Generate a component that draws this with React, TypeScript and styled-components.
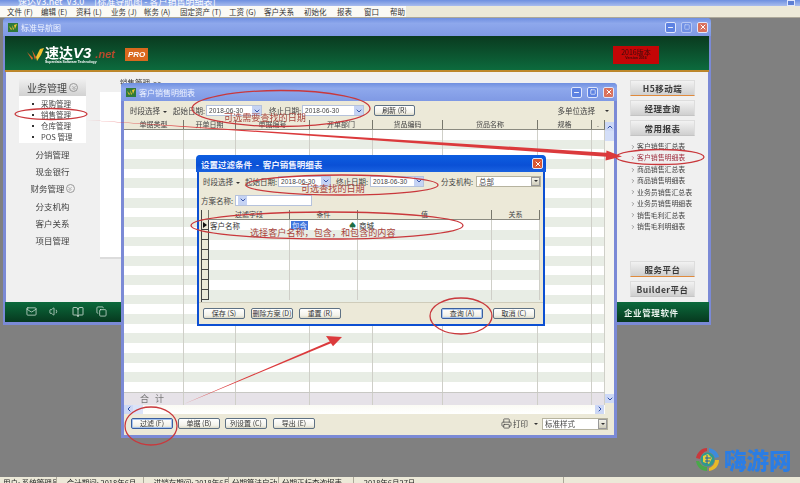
import React from "react";
import styled, { createGlobalStyle } from "styled-components";
import { Mail, Volume1, BookOpen, Copy, Printer, ChevronDown, ChevronUp, ChevronLeft, ChevronRight, ChevronsDown, Minus, Square, X } from "lucide-react";

const Global = createGlobalStyle`
  html, body { margin: 0; padding: 0; width: 800px; height: 483px; overflow: hidden; background: #808080; }
  body { font-family: "Noto Sans CJK SC", "Liberation Sans", sans-serif; color: #333; }
  * { box-sizing: border-box; }
`;

const Page = styled.div`
  position: relative;
  width: 800px;
  height: 483px;
  display: flex;
  flex-direction: column;
  overflow: hidden;
  filter: blur(0.35px);
`;

const AppTitle = styled.div`
  height: 6px;
  background: linear-gradient(#6d8fe0, #a9bdee);
  color: #fff;
  font-size: 9px;
  line-height: 8px;
  padding-left: 18px;
  display: flex;
  justify-content: space-between;
  overflow: hidden;
  align-items: flex-end;
  white-space: pre;
`;
const AppCorner = styled.span`
  width: 8px;
  height: 6px;
  background: #5d7fd4;
  border: 1px solid #dfe6fb;
  margin-right: 5px;
`;
const MenuBar = styled.div`
  height: 12px;
  background: #ece9d8;
  border-bottom: 1px solid #aca899;
  display: flex;
  font-size: 7.5px;
  line-height: 11px;
  color: #333;
`;
const MenuItem = styled.span<{ $w: number }>`
  width: ${(p) => p.$w}px;
  padding-left: 7px;
  background: #fbfaf5;
  white-space: nowrap;
`;
const MenuRest = styled.span`
  flex: 1;
`;

const Desktop = styled.div`
  position: relative;
  flex: 1;
  background: #808080;
`;
const StatusBar = styled.div`
  height: 6px;
  background: #ece9d8;
  display: flex;
  font-size: 7.5px;
  line-height: 11px;
  overflow: hidden;
  color: #222;
  white-space: pre;
`;
const StatusCell = styled.span<{ $w: number }>`
  width: ${(p) => p.$w}px;
  flex: none;
  overflow: hidden;
  padding-left: 3px;
  border-right: 1px solid #aca899;
`;

const Win = styled.section<{ $x: number; $y: number; $w: number; $h: number; $dlg?: boolean }>`
  position: absolute;
  left: ${(p) => p.$x}px;
  top: ${(p) => p.$y}px;
  width: ${(p) => p.$w}px;
  height: ${(p) => p.$h}px;
  border: ${(p) => (p.$dlg ? "2px solid #0c4fd2" : "3px solid #7b8ad6")};
  border-top: 0;
  border-radius: 4px 4px 0 0;
  display: flex;
  flex-direction: column;
  background: #ece9d8;
`;
const TitleBar = styled.header<{ $dlg?: boolean }>`
  height: ${(p) => (p.$dlg ? 17 : 18)}px;
  flex: none;
  margin: 0 -3px;
  padding: 0 3px 0 5px;
  border-radius: 4px 4px 0 0;
  background: ${(p) => (p.$dlg ? "linear-gradient(#0d5ee0, #0a50d6 60%, #1a62e0)" : "linear-gradient(#6f8fe0, #8ea8ec 30%, #7f99e4)")};
  color: #eef2ff;
  font-size: ${(p) => (p.$dlg ? 8.5 : 8)}px;
  font-weight: ${(p) => (p.$dlg ? 700 : 400)};
  display: flex;
  align-items: center;
  gap: 3px;
  white-space: pre;
`;
const TitleText = styled.span`
  flex: 1;
`;
const WinIcon = styled.svg`
  width: 10px;
  height: 9px;
  flex: none;
`;
const CapBtn = styled.span<{ $c: string; $off?: boolean }>`
  width: 11px;
  height: 11px;
  margin-left: 2px;
  border: 1px solid #dfe6fb;
  border-radius: 2px;
  background: ${(p) => p.$c};
  color: #fff;
  display: flex;
  align-items: center;
  justify-content: center;
  opacity: ${(p) => (p.$off ? 0.55 : 1)};
`;

const AppGlyph = () => (
  <WinIcon viewBox="0 0 10 9">
    <rect width="10" height="9" fill="#2f7a3a" />
    <path d="M1 3l2 4 1-1zM4 2l1 5 1-1zM6 2l1 4 2-5z" fill="#f4c430" />
  </WinIcon>
);
const Caption = ({ maxOff }: { maxOff?: boolean }) => (
  <>
    <CapBtn $c="#5d82e2"><Minus size={7} strokeWidth={3} /></CapBtn>
    <CapBtn $c="#5d82e2" $off={maxOff}><Square size={6} strokeWidth={2.5} /></CapBtn>
    <CapBtn $c="#d9705c"><X size={8} strokeWidth={3} /></CapBtn>
  </>
);

/* navigator window */
const Banner = styled.div`
  height: 36px;
  flex: none;
  background: linear-gradient(#0a3a1f, #0c6a3d 94%, #c08a2c 94%, #b9842a);
  margin: 0 -1px;
  display: flex;
  align-items: center;
  padding: 1px 50px 0 22px;
`;
const BrandIcon = styled.svg`
  width: 17px;
  height: 14px;
  margin-right: 1px;
`;
const BrandBlock = styled.div`
  display: flex;
  flex-direction: column;
  line-height: 1;
`;
const BrandName = styled.div`
  color: #fff;
  font-size: 14px;
  font-weight: 700;
  display: flex;
  align-items: baseline;
  line-height: 14px;
  white-space: pre;
`;
const BrandV = styled.i`
  font-family: "Liberation Sans", sans-serif;
  font-size: 15px;
`;
const BrandNet = styled.i`
  font-family: "Liberation Sans", sans-serif;
  color: #b84a2c;
  font-size: 11px;
  margin-left: 4px;
`;
const BrandSub = styled.div`
  color: #fff;
  font-size: 3.4px;
  font-weight: 700;
  white-space: nowrap;
  font-family: "Liberation Sans", sans-serif;
`;
const ProBadge = styled.i`
  background: #d9691e;
  color: #fff;
  font-family: "Liberation Sans", sans-serif;
  font-weight: 700;
  font-size: 8px;
  padding: 2px 3px;
  margin-left: 10px;
`;
const BannerGap = styled.div`
  flex: 1;
`;
const Version = styled.div`
  width: 46px;
  height: 18px;
  background: #c40606;
  color: #3a0b0b;
  text-align: center;
  font-size: 7px;
  line-height: 7px;
  padding-top: 3px;
`;
const VersionSub = styled.div`
  font-size: 3.5px;
  line-height: 4px;
  font-weight: 700;
  font-family: "Liberation Sans", sans-serif;
`;
const NavMain = styled.div`
  flex: 1;
  display: flex;
  background: #f0f0f0;
  min-height: 0;
`;
const LeftCol = styled.nav`
  width: 94px;
  flex: none;
  padding: 7px 0 0 13px;
`;
const NavHead = styled.div`
  width: 67px;
  height: 17px;
  background: linear-gradient(#efefef, #d2d2d2);
  font-size: 10px;
  line-height: 16px;
  color: #444;
  display: flex;
  align-items: center;
  justify-content: center;
  gap: 2px;
`;
const Collapse = styled.span`
  width: 9px;
  height: 9px;
  border: 1px solid #999;
  border-radius: 50%;
  display: flex;
  align-items: center;
  justify-content: center;
  color: #666;
`;
const SubMenu = styled.ul`
  width: 67px;
  height: 47px;
  margin: 0 0 3px;
  padding: 2px 0 0 13px;
  list-style: none;
  background: #fff;
`;
const SubItem = styled.li`
  font-size: 7.5px;
  line-height: 11px;
  color: #444;
  display: flex;
  align-items: center;
  gap: 7px;
  white-space: pre;
  &::before {
    content: "";
    width: 2px;
    height: 2px;
    background: #333;
  }
`;
const NavLink = styled.div`
  width: 67px;
  height: 17.2px;
  font-size: 8.5px;
  line-height: 17px;
  text-align: center;
  color: #444;
  display: flex;
  justify-content: center;
  align-items: center;
  gap: 1px;
`;
const Center = styled.div`
  flex: 1;
  display: flex;
  flex-direction: column;
  padding-top: 6px;
`;
const Crumb = styled.div`
  height: 14px;
  padding-left: 20px;
  font-size: 7.5px;
  line-height: 10px;
  color: #333;
  white-space: pre;
`;
const CenterWhite = styled.div`
  height: 167px;
  background: #fff;
  border-bottom: 2px solid #dcdcdc;
`;
const RightCol = styled.aside`
  width: 91px;
  flex: none;
  padding: 8px 0 0 13px;
  display: flex;
  flex-direction: column;
`;
const BigBtn = styled.div<{ $line?: boolean; $mb: number }>`
  width: 65px;
  height: 16px;
  flex: none;
  margin-bottom: ${(p) => p.$mb}px;
  background: linear-gradient(#f2f2f2, #cfcfcf);
  border: 1px solid #ddd;
  border-bottom: ${(p) => (p.$line ? "1px solid #e08a3c" : "1px solid #c4c4c4")};
  font-size: 8.5px;
  font-weight: 700;
  line-height: 14px;
  text-align: center;
  letter-spacing: 0.5px;
  color: #3a3a3a;
`;
const ReportList = styled.ul`
  list-style: none;
  margin: 0 0 29px;
  padding: 0;
  height: 91px;
  flex: none;
`;
const ReportItem = styled.li<{ $on?: boolean }>`
  height: 11.45px;
  font-size: 6.9px;
  line-height: 11.45px;
  color: ${(p) => (p.$on ? "#a03040" : "#444")};
  display: flex;
  align-items: center;
  gap: 1px;
  white-space: nowrap;
`;
const NavFoot = styled.footer`
  height: 20px;
  flex: none;
  background: linear-gradient(#0b6a3c, #07391f);
  margin: 0 -1px;
  display: flex;
  align-items: center;
  padding-left: 21px;
  color: #e4efe8;
`;
const FootIcons = styled.div`
  display: flex;
  gap: 12px;
  width: 598px;
`;
const FootTitle = styled.span`
  font-size: 8.5px;
  font-weight: 700;
  letter-spacing: 0.6px;
  color: #e8f2ec;
`;

/* toolbars */
const ToolRow = styled.div<{ $h: number; $pad?: number }>`
  height: ${(p) => p.$h}px;
  flex: none;
  display: flex;
  align-items: center;
  padding-left: ${(p) => p.$pad ?? 6}px;
  font-size: 7.5px;
  color: #444;
  white-space: pre;
`;
const Label = styled.span<{ $w: number }>`
  width: ${(p) => p.$w}px;
  flex: none;
`;
const Caret = styled.span`
  display: inline-block;
  width: 0;
  height: 0;
  margin-left: 3px;
  vertical-align: 1px;
  border-left: 2px solid transparent;
  border-right: 2px solid transparent;
  border-top: 2.5px solid #333;
`;
const DateBox = styled.div<{ $w: number; $mr: number }>`
  width: ${(p) => p.$w}px;
  height: 11px;
  flex: none;
  margin-right: ${(p) => p.$mr}px;
  background: #fff;
  border: 1px solid #b5c2dc;
  font-size: 6.5px;
  line-height: 9px;
  padding-left: 2px;
  letter-spacing: 0.1px;
  color: #444;
  display: flex;
  justify-content: space-between;
  font-family: "Liberation Sans", sans-serif;
`;
const DropBtn = styled.span`
  width: 9px;
  background: #c5d3f4;
  color: #3a55a8;
  display: flex;
  align-items: center;
  justify-content: center;
`;
const XpBtn = styled.button<{ $w?: number; $on?: boolean; $mr?: number }>`
  width: ${(p) => p.$w ?? 42}px;
  height: 11px;
  flex: none;
  margin: 0 ${(p) => p.$mr ?? 0}px 0 0;
  padding: 0;
  border: 1px solid ${(p) => (p.$on ? "#3a5f9f" : "#5e7184")};
  border-radius: 2px;
  background: linear-gradient(#fff, #f3f2ea 70%, #dcd9c8);
  box-shadow: ${(p) => (p.$on ? "inset 0 0 0 1px #a9c6ee" : "none")};
  font: 7px/9px "Noto Sans CJK SC", sans-serif;
  color: #333;
  white-space: nowrap;
`;
const Spacer = styled.span`
  flex: 1;
`;
const SelectBox = styled.div<{ $w: number; $h?: number }>`
  width: ${(p) => p.$w}px;
  height: ${(p) => p.$h ?? 11}px;
  flex: none;
  background: #fff;
  border: 1px solid #b6b39f;
  font-size: 7.5px;
  line-height: 9px;
  padding-left: 2px;
  color: #444;
  display: flex;
  justify-content: space-between;
`;
const SelBtn = styled.span`
  width: 9px;
  background: linear-gradient(#f4f3ea, #d0cdbb);
  border: 1px solid #999;
  display: flex;
  align-items: center;
  justify-content: center;
`;

/* sheet */
const TableArea = styled.div`
  flex: 1;
  min-height: 0;
  display: flex;
`;
const SheetCol = styled.div`
  flex: 1;
  min-width: 0;
  display: flex;
  flex-direction: column;
`;
const HeaderRow = styled.div<{ $cols: string }>`
  display: grid;
  grid-template-columns: ${(p) => p.$cols};
  height: 10px;
  flex: none;
  background: #ece9d8;
  border-bottom: 1px solid #8a8a80;
`;
const HeadCell = styled.div`
  font-size: 7px;
  line-height: 9px;
  text-align: center;
  color: #444;
  border-right: 1px solid #77776c;
  overflow: hidden;
  white-space: nowrap;
`;
const DataRow = styled.div<{ $cols: string; $alt: boolean; $h: number }>`
  display: grid;
  grid-template-columns: ${(p) => p.$cols};
  height: ${(p) => p.$h}px;
  flex: none;
  background: ${(p) => (p.$alt ? "#e8ede5" : "#fff")};
`;
const DataCell = styled.div`
  border-right: 1px solid #cfcfc8;
  font-size: 7.5px;
  line-height: 9px;
  color: #333;
  padding-left: 1px;
  display: flex;
  align-items: center;
  justify-content: space-between;
  white-space: nowrap;
  overflow: hidden;
`;
const Highlight = styled.span`
  background: #3f74dc;
  color: #dfe8ff;
  padding: 0 1px;
`;
const Spade = styled.span`
  color: #1f6d43;
  font-size: 7px;
  padding-right: 1px;
`;
const TotalRow = styled(DataRow)`
  background: #e6e2e8;
  border-top: 1px solid #c8c8c4;
  color: #777;
`;
const TotalCell = styled(DataCell)`
  font-size: 9px;
  letter-spacing: 6px;
  padding-left: 16px;
  color: #777;
  justify-content: flex-start;
`;
const HScroll = styled.div`
  height: 9px;
  flex: none;
  background: linear-gradient(#fbfbf4, #fff);
  display: flex;
  padding-right: 1px;
`;
const ScrollBtn = styled.span`
  width: 9px;
  height: 9px;
  flex: none;
  background: #cdd8f6;
  color: #2f4fa8;
  display: flex;
  align-items: center;
  justify-content: center;
`;
const Thumb = styled.span`
  width: 10px;
  background: #dbe3f8;
`;
const VScroll = styled.div`
  width: 9px;
  flex: none;
  margin-top: 2px;
  display: flex;
  flex-direction: column;
  background: #f6f6f0;
`;
const VThumb = styled.span`
  height: 10px;
  background: #d3def8;
`;
const VGap = styled.span`
  flex: 1;
`;
const Corner = styled.span`
  height: 9px;
  background: #ece9d8;
`;
const PrintLabel = styled.span`
  display: flex;
  align-items: center;
  gap: 1px;
  font-size: 7.5px;
  margin-right: 4px;
  color: #444;
`;

/* dialog table */
const DlgTable = styled.div`
  flex: 1;
  min-height: 0;
  margin-left: 2px;
  margin-right: 3px;
  display: flex;
  flex-direction: column;
  background: #e8ede5;
  border-left: 1px solid #444;
`;
const RowMark = styled.div`
  border-right: 1px solid #444;
  border-bottom: 1px solid #444;
  background: #ece9d8;
  display: flex;
  align-items: center;
  justify-content: center;
`;
const Tri = styled.span`
  width: 0;
  height: 0;
  border-left: 4px solid #111;
  border-top: 3px solid transparent;
  border-bottom: 3px solid transparent;
`;
const DlgFoot = styled.footer`
  height: 22px;
  flex: none;
  border-top: 1px solid #cfccba;
  display: flex;
  align-items: center;
  padding: 0 8px 0 4px;
`;

/* overlay */
const Overlay = styled.svg`
  position: absolute;
  left: 0;
  top: 0;
  width: 800px;
  height: 483px;
  pointer-events: none;
`;
const Note = styled.span<{ $x: number; $y: number }>`
  position: absolute;
  left: ${(p) => p.$x}px;
  top: ${(p) => p.$y}px;
  font-size: 9.1px;
  line-height: 12px;
  color: #a8443c;
  white-space: nowrap;
`;
const Watermark = styled.div`
  position: absolute;
  left: 695px;
  top: 447px;
  display: flex;
  align-items: center;
  gap: 4px;
`;
const WatermarkText = styled.span`
  font-size: 22.5px;
  line-height: 25px;
  font-weight: 900;
  color: #2b7de4;
  white-space: nowrap;
`;

const salesCols = "60px 52px 74px 63px 70px 95px 54px 1fr";
const salesHead = ["单据类型", "开单日期", "单据编号", "开单部门", "货品编码", "货品名称", "规格", "."];
const dlgCols = "7px 81px 68px 134px 1fr";

const Drop = () => (
  <DropBtn><ChevronDown size={8} strokeWidth={3} /></DropBtn>
);
const Sel = () => (
  <SelBtn><Caret style={{ margin: 0 }} /></SelBtn>
);

export default function App() {
  return (
    <Page>
      <Global />
      <AppTitle>
        <span>速达V3.net  V3.0     [标准导航图 - 客户销售明细表]</span>
        <AppCorner />
      </AppTitle>
      <MenuBar>
        {[["文件 (F)", 34], ["编辑 (E)", 35], ["资料 (L)", 35], ["业务 (J)", 33], ["帐务 (A)", 36], ["固定资产 (T)", 49], ["工资 (G)", 35], ["客户关系", 40], ["初始化", 33], ["报表", 27], ["窗口", 26], ["帮助", 23]].map(([t, w]) => (
          <MenuItem key={t as string} $w={w as number}>{t}</MenuItem>
        ))}
        <MenuRest />
      </MenuBar>
      <Desktop>
        <Win $x={3} $y={0} $w={708} $h={307}>
          <TitleBar>
            <AppGlyph />
            <TitleText>标准导航图</TitleText>
            <Caption maxOff />
          </TitleBar>
          <Banner>
            <BrandIcon viewBox="0 0 17 14">
              <path d="M0 4l5 8 1-2zM5 2l3 10 1-3z" fill="#e0662a" />
              <path d="M9 9l4-8 4-1-3 7-4 6z" fill="#f2c230" />
            </BrandIcon>
            <BrandBlock>
              <BrandName>速达<BrandV>V3</BrandV><BrandNet>.net</BrandNet></BrandName>
              <BrandSub>Superdata Software Technology</BrandSub>
            </BrandBlock>
            <ProBadge>PRO</ProBadge>
            <BannerGap />
            <Version>
              2016版本
              <VersionSub>Version 2016</VersionSub>
            </Version>
          </Banner>
          <NavMain>
            <LeftCol>
              <NavHead>业务管理<Collapse><ChevronsDown size={6} /></Collapse></NavHead>
              <SubMenu>
                {["采购管理", "销售管理", "仓库管理", "POS 管理"].map((t) => <SubItem key={t}>{t}</SubItem>)}
              </SubMenu>
              <NavLink>分销管理</NavLink>
              <NavLink>现金银行</NavLink>
              <NavLink>财务管理<Collapse><ChevronsDown size={6} /></Collapse></NavLink>
              <NavLink>分支机构</NavLink>
              <NavLink>客户关系</NavLink>
              <NavLink>项目管理</NavLink>
            </LeftCol>
            <Center>
              <Crumb>销售管理  &gt;&gt;</Crumb>
              <CenterWhite />
            </Center>
            <RightCol>
              <BigBtn $line $mb={4}>H5移动端</BigBtn>
              <BigBtn $mb={4}>经理查询</BigBtn>
              <BigBtn $mb={5}>常用报表</BigBtn>
              <ReportList>
                {["客户销售汇总表", "客户销售明细表", "商品销售汇总表", "商品销售明细表", "业务员销售汇总表", "业务员销售明细表", "销售毛利汇总表", "销售毛利明细表"].map((t, i) => (
                  <ReportItem key={t} $on={i === 1}><ChevronRight size={6} strokeWidth={2} />{t}</ReportItem>
                ))}
              </ReportList>
              <BigBtn $line $mb={4}>服务平台</BigBtn>
              <BigBtn $mb={0}>Builder平台</BigBtn>
            </RightCol>
          </NavMain>
          <NavFoot>
            <FootIcons>
              <Mail size={11} strokeWidth={1.5} />
              <Volume1 size={11} strokeWidth={1.5} />
              <BookOpen size={12} strokeWidth={1.5} />
              <Copy size={11} strokeWidth={1.5} />
            </FootIcons>
            <FootTitle>企业管理软件</FootTitle>
          </NavFoot>
        </Win>

        <Win $x={121} $y={65} $w={496} $h={355}>
          <TitleBar>
            <AppGlyph />
            <TitleText>客户销售明细表</TitleText>
            <Caption />
          </TitleBar>
          <ToolRow $h={19} $pad={6}>
            <Label $w={43}>时段选择<Caret /></Label>
            <Label $w={33}>起始日期:</Label>
            <DateBox $w={56} $mr={7}>2018-06-30<Drop /></DateBox>
            <Label $w={33}>终止日期:</Label>
            <DateBox $w={62} $mr={10}>2018-06-30<Drop /></DateBox>
            <XpBtn $w={41}>刷新 (R)</XpBtn>
            <Spacer />
            <span>多单位选择</span>
            <Caret style={{ margin: "0 5px 0 10px" }} />
          </ToolRow>
          <TableArea>
            <SheetCol>
              <HeaderRow $cols={salesCols}>
                {salesHead.map((h) => <HeadCell key={h}>{h}</HeadCell>)}
              </HeaderRow>
              {Array.from({ length: 27 }, (_, i) => (
                <DataRow key={i} $cols={salesCols} $alt={i % 2 === 1} $h={9.7}>
                  {salesHead.map((h) => <DataCell key={h} />)}
                </DataRow>
              ))}
              <TotalRow $cols={salesCols} $alt={false} $h={13}>
                <TotalCell>合计</TotalCell>
                {salesHead.slice(1).map((h) => <DataCell key={h} />)}
              </TotalRow>
              <HScroll>
                <ScrollBtn><ChevronLeft size={8} strokeWidth={3} /></ScrollBtn>
                <Thumb />
                <Spacer />
                <ScrollBtn><ChevronRight size={8} strokeWidth={3} /></ScrollBtn>
              </HScroll>
            </SheetCol>
            <VScroll>
              <ScrollBtn><ChevronUp size={8} strokeWidth={3} /></ScrollBtn>
              <VThumb />
              <VGap />
              <ScrollBtn><ChevronDown size={8} strokeWidth={3} /></ScrollBtn>
              <Corner />
            </VScroll>
          </TableArea>
          <ToolRow $h={23} $pad={7}>
            <XpBtn $on $mr={5}>过滤 (F)</XpBtn>
            <XpBtn $mr={5}>单据 (B)</XpBtn>
            <XpBtn $mr={6}>列设置 (C)</XpBtn>
            <XpBtn>导出 (E)</XpBtn>
            <Spacer />
            <PrintLabel><Printer size={11} strokeWidth={1.6} />打印<Caret style={{ marginLeft: 5 }} /></PrintLabel>
            <SelectBox $w={66} $h={12}>标准样式<Sel /></SelectBox>
            <Label $w={6} />
          </ToolRow>
        </Win>

        <Win $dlg $x={197} $y={137} $w={348} $h={171}>
          <TitleBar $dlg>
            <TitleText>设置过滤条件  -  客户销售明细表</TitleText>
            <CapBtn $c="#d9552f"><X size={8} strokeWidth={3} /></CapBtn>
          </TitleBar>
          <ToolRow $h={18} $pad={4}>
            <Label $w={42}>时段选择<Caret /></Label>
            <Label $w={33}>起始日期:</Label>
            <DateBox $w={53} $mr={5}>2018-06-30<Drop /></DateBox>
            <Label $w={34}>终止日期:</Label>
            <DateBox $w={54} $mr={17}>2018-06-30<Drop /></DateBox>
            <Label $w={35}>分支机构:</Label>
            <SelectBox $w={65}>总部<Sel /></SelectBox>
          </ToolRow>
          <ToolRow $h={20} $pad={2}>
            <Label $w={34}>方案名称:</Label>
            <DateBox $w={77} $mr={0}> <Drop /></DateBox>
          </ToolRow>
          <DlgTable>
            <HeaderRow $cols={dlgCols}>
              {["", "过滤字段", "条件", "值", "关系"].map((h) => <HeadCell key={h}>{h}</HeadCell>)}
            </HeaderRow>
            <DataRow $cols={dlgCols} $alt={false} $h={10}>
              <RowMark><Tri /></RowMark>
              <DataCell>客户名称</DataCell>
              <DataCell><Highlight>包含</Highlight><Spade>♠</Spade></DataCell>
              <DataCell>商城</DataCell>
              <DataCell />
            </DataRow>
            {Array.from({ length: 7 }, (_, i) => (
              <DataRow key={i} $cols={dlgCols} $alt={i % 2 === 0} $h={10}>
                <RowMark />
                <DataCell />
                <DataCell />
                <DataCell />
                <DataCell />
              </DataRow>
            ))}
          </DlgTable>
          <DlgFoot>
            <XpBtn $mr={6}>保存 (S)</XpBtn>
            <XpBtn $mr={6}>删除方案 (D)</XpBtn>
            <XpBtn>重置 (R)</XpBtn>
            <Spacer />
            <XpBtn $on $mr={10}>查询 (A)</XpBtn>
            <XpBtn>取消 (C)</XpBtn>
          </DlgFoot>
        </Win>
      </Desktop>
      <StatusBar>
        <StatusCell $w={57}>用户: 系统管理员</StatusCell>
        <StatusCell $w={87}>    会计期间: 2018年6月</StatusCell>
        <StatusCell $w={85}>    进销存期间: 2018年6月</StatusCell>
        <StatusCell $w={50}>分期算法启动</StatusCell>
        <StatusCell $w={75}>分期正标查询报表</StatusCell>
        <StatusCell $w={210}>    2018年6月27日</StatusCell>
      </StatusBar>

      <Overlay viewBox="0 0 800 483">
        <g fill="none" stroke="#c9383c" strokeWidth="1.3">
          <ellipse cx="51" cy="114" rx="36" ry="5.5" />
          <ellipse cx="281" cy="108.5" rx="89" ry="18" />
          <ellipse cx="660" cy="157" rx="44" ry="7.5" />
          <ellipse cx="342" cy="185" rx="96" ry="10" />
          <ellipse cx="327" cy="225.5" rx="136" ry="13.5" />
          <ellipse cx="461" cy="316" rx="31" ry="18" />
          <ellipse cx="151" cy="426" rx="26" ry="19" />
        </g>
        <g fill="#db3a3c">
          <polygon points="86,120 610,153 610,157" />
          <polygon points="622,156.5 606.5,150.5 605.5,160.5" />
          <polygon points="184,404 333,340 334,342" />
          <polygon points="342,337 333,346.3 326,336" />
        </g>
      </Overlay>
      <Note $x={224} $y={111}>可选需要查找的日期</Note>
      <Note $x={301} $y={182}>可选查找的日期</Note>
      <Note $x={250} $y={226}>选择客户名称，包含，和包含的内容</Note>
      <Watermark>
        <svg width="25" height="25" viewBox="0 0 25 25">
          <path d="M12 1C6 1 2 6 1 11l4 1c1-4 3-7 7-8z" fill="#c9383c" />
          <path d="M1 14c1 6 5 10 11 10v-4c-4 0-7-3-8-6z" fill="#49a84a" />
          <path d="M14 24c6-1 10-5 10-11h-4c0 4-3 7-6 8z" fill="#e8b928" />
          <path d="M14 1c5 1 9 4 10 9l-4 1c-1-3-3-5-6-6z" fill="#3d8bdd" />
          <circle cx="12.5" cy="12.5" r="7" fill="#2f9a8e" />
          <path d="M8 9l5-2 4 4-3 6-6-2z" fill="#e5d13a" />
          <path d="M10 11h6M10 14h5M12 8v9" stroke="#1d5fa8" strokeWidth="1" />
        </svg>
        <WatermarkText>嗨游网</WatermarkText>
      </Watermark>
    </Page>
  );
}
